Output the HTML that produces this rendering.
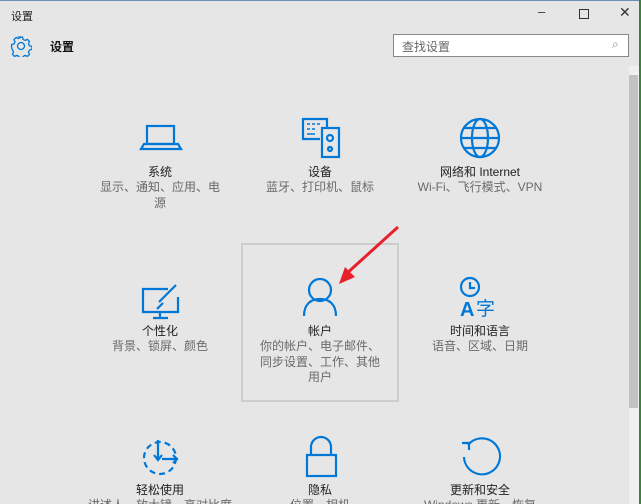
<!DOCTYPE html>
<html><head><meta charset="utf-8"><style>
*{margin:0;padding:0;box-sizing:border-box}
html,body{width:641px;height:504px;overflow:hidden}
body{background:#e6e6e6;font-family:"Liberation Sans","Noto Sans CJK SC",sans-serif;position:relative}
.a{position:absolute}
.t{position:absolute;width:160px;text-align:center;font-size:12px;color:#222;line-height:16px}
.s{position:absolute;width:130px;text-align:center;font-size:12px;color:#6a6a6a;line-height:15.5px}
</style></head><body>
<div class="a" style="left:0;top:0;width:641px;height:1px;background:#6b8fb5"></div>
<div class="a" style="left:11px;top:8px;font-size:11px;color:#222">设置</div>
<div class="a" style="left:538px;top:4px;font-size:13px;color:#333">–</div>
<div class="a" style="left:579px;top:9px;width:10px;height:10px;border:1px solid #333"></div>
<div class="a" style="left:619px;top:4px;font-size:14px;color:#333">✕</div>
<svg class="a" style="left:10px;top:35px" width="22" height="22" viewBox="0 0 22 22"><g fill="none" stroke="#0078d7" stroke-width="1.3"><circle cx="11" cy="11" r="3.5"/><path d="M9.5 2h3l.6 2.4 2 1 2.3-1 2.1 2.1-1 2.3 1 2 2.4.6v3l-2.4.6-1 2 1 2.3-2.1 2.1-2.3-1-2 1-.6 2.4h-3l-.6-2.4-2-1-2.3 1-2.1-2.1 1-2.3-1-2L1.6 12.5v-3l2.4-.6 1-2-1-2.3 2.1-2.1 2.3 1 2-1z"/></g></svg>
<div class="a" style="left:50px;top:38px;font-size:12px;font-weight:bold;color:#111">设置</div>
<div class="a" style="left:393px;top:34px;width:236px;height:23px;border:1px solid #888;background:#fff"></div>
<div class="a" style="left:402px;top:38px;font-size:12px;color:#666">查找设置</div>
<div class="a" style="left:612px;top:37px;font-size:12px;color:#888">⌕</div>
<div class="a" style="left:629px;top:66px;width:10px;height:438px;background:#f0f0f0"></div>
<div class="a" style="left:629px;top:75px;width:9px;height:333px;background:#c2c2c2"></div>
<div class="a" style="left:639px;top:0;width:2px;height:504px;background:#3a7f3a"></div>
<div class="a" style="left:241px;top:243px;width:158px;height:159px;border:2px solid #ccc"></div>
<svg class="a" style="left:0;top:0" width="641" height="504"><g fill="none" stroke="#0078d7" stroke-width="2.2">
<rect x="147" y="126" width="27" height="18"/><path d="M141 149h40l-3-5h-34z"/>
<path d="M320 139h-17v-20h24v8"/><rect x="322" y="128" width="17" height="29"/><circle cx="330" cy="138" r="3"/><circle cx="330" cy="149" r="2"/>
<path d="M307 124h3M312 124h3M317 124h3M307 129h3M312 129h3M307 134h8" stroke-width="1.6"/>
<circle cx="480" cy="138" r="19"/><ellipse cx="480" cy="138" rx="8" ry="19"/><path d="M461 138h38M464 128h32M464 148h32"/>
<path d="M168 289h-25v23h35v-15M160 312v5M153 318h15"/><path d="M176 285l-17 17M163 303l-6 6"/>
<circle cx="320" cy="290" r="11"/><path d="M304 316c0-12 7-17 16-17s16 5 16 17"/>
<circle cx="470" cy="287" r="9"/><path d="M470 282v6h5"/>
<circle cx="160" cy="458" r="16" stroke-dasharray="6 4"/><path d="M158 440v19M154 455l4 5 4-5M162 459h16M173 455l4 4-4 4"/>
<path d="M311 455v-8a10 10 0 0 1 20 0v8"/><rect x="307" y="455" width="29" height="21"/>
<path d="M468 445a18 18 0 1 1 -4 12"/><path d="M462 443h7v7"/>
</g>
<text x="460" y="316" fill="#0078d7" font-size="20" font-weight="bold" font-family="Liberation Sans">A</text>
<text x="476" y="315" fill="#0078d7" font-size="19" font-family="Noto Sans CJK SC">字</text>
<path d="M398 227L345 275" stroke="#e8202a" stroke-width="3"/><path d="M339 284l6-17 10 10z" fill="#e8202a"/>
</svg>
<div class="t" style="left:80px;top:164px">系统</div>
<div class="s" style="left:95px;top:180px">显示、通知、应用、电源</div>
<div class="t" style="left:240px;top:164px">设备</div>
<div class="s" style="left:255px;top:180px;width:130px">蓝牙、打印机、鼠标</div>
<div class="t" style="left:400px;top:164px">网络和 Internet</div>
<div class="s" style="left:400px;top:180px;width:160px">Wi-Fi、飞行模式、VPN</div>
<div class="t" style="left:80px;top:323px">个性化</div>
<div class="s" style="left:95px;top:339px">背景、锁屏、颜色</div>
<div class="t" style="left:240px;top:323px">帐户</div>
<div class="s" style="left:255px;top:339px">你的帐户、电子邮件、同步设置、工作、其他用户</div>
<div class="t" style="left:400px;top:323px">时间和语言</div>
<div class="s" style="left:415px;top:339px">语音、区域、日期</div>
<div class="t" style="left:80px;top:482px">轻松使用</div>
<div class="s" style="left:85px;top:498px;width:150px;white-space:nowrap">讲述人、放大镜、高对比度</div>
<div class="t" style="left:240px;top:482px">隐私</div>
<div class="s" style="left:255px;top:498px">位置、相机</div>
<div class="t" style="left:400px;top:482px">更新和安全</div>
<div class="s" style="left:405px;top:498px;width:150px;white-space:nowrap">Windows 更新、恢复</div>
</body></html>
